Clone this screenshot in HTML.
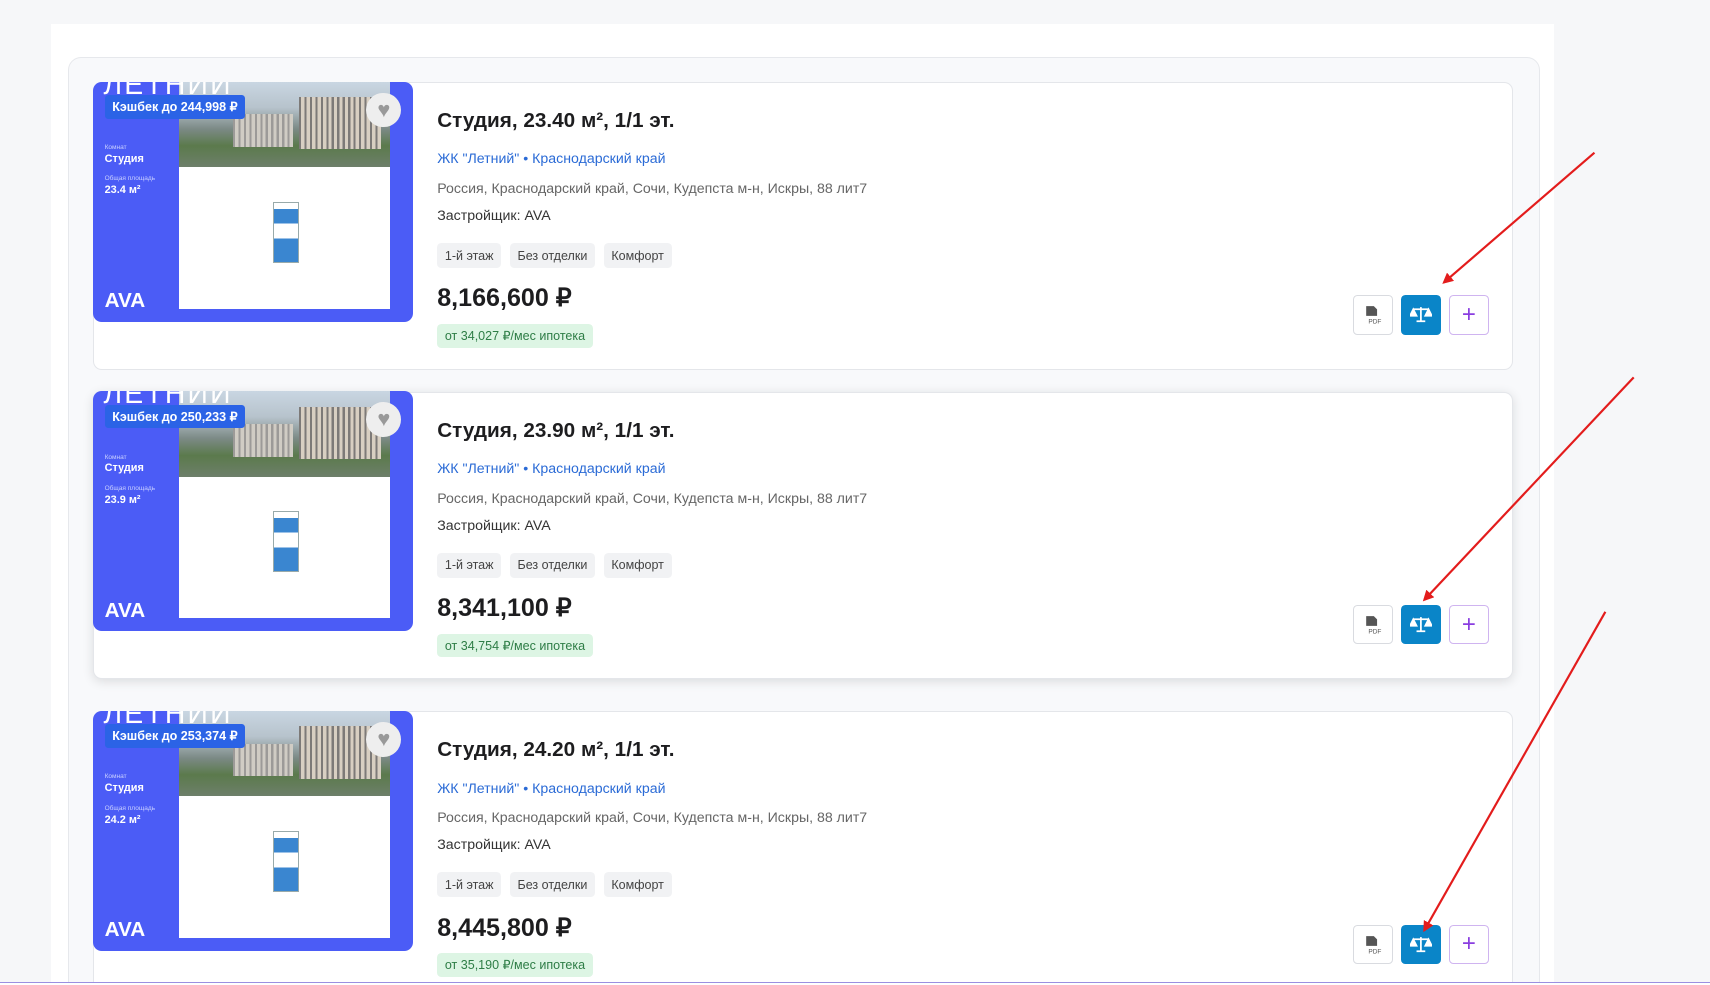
<!DOCTYPE html>
<html><head><meta charset="utf-8"><style>
html,body{margin:0;padding:0;background:#f6f7f9;overflow:hidden;width:1710px;height:985px}
#w{zoom:1.0906;width:1568px;height:903px;position:relative;overflow:hidden;font-family:"Liberation Sans",sans-serif}
.panel{position:absolute;left:47px;top:22px;width:1378px;height:881px;background:#fff}
.cont{position:absolute;left:62px;top:52px;width:1348px;height:870px;background:#f8f9fb;border:1px solid #e6e8ec;border-radius:12px}
.card{position:absolute;left:85px;width:1302px;height:264px;background:#fff;border:1px solid #e4e6ea;border-radius:8px;box-sizing:border-box}
.card.sh{box-shadow:0 2px 10px rgba(0,0,0,.12)}
.img{position:absolute;left:-1px;top:-1px;width:294px;height:220px;background:#4b5cf6;border-radius:8px;overflow:hidden}
.photo{position:absolute;left:79px;top:0;width:194px;height:78px;background:linear-gradient(180deg,#c9d6e2 0,#b7c3cc 30%,#7c8a86 55%,#5b7a4c 75%,#6d7f6a 100%)}
.bld{position:absolute;left:110px;top:14px;width:75px;height:48px;background:repeating-linear-gradient(90deg,#7d7a78 0 2px,#d8cfc2 2px 5px)}
.bld2{position:absolute;left:50px;top:30px;width:55px;height:30px;background:repeating-linear-gradient(90deg,#9c9a98 0 2px,#d0ccc4 2px 5px)}
.plan{position:absolute;left:79px;top:78px;width:194px;height:130px;background:#fff}
.fp{position:absolute;left:86px;top:32px;width:22px;height:54px;border:1px solid #9aa;background:linear-gradient(180deg,#fff 0 10%,#3a86d0 10% 35%,#fff 35% 60%,#3a86d0 60% 100%)}
.let{position:absolute;left:10px;top:-12px;color:#fff;font-size:26px;letter-spacing:2px}
.cash{position:absolute;left:11px;top:12px;background:#2b63e6;color:#fff;font-size:11.5px;font-weight:bold;padding:4px 7px;border-radius:3px}
.heart{position:absolute;left:251px;top:10px;width:32px;height:32px;border-radius:50%;background:#eee;color:#999;font-size:20px;text-align:center;line-height:32px}
.sm{position:absolute;left:11px;color:#c8cfff;font-size:6px}
.bv{position:absolute;left:11px;color:#fff;font-size:10px;font-weight:bold}
.ava{position:absolute;left:11px;top:190px;color:#fff;font-size:19px;font-weight:900}
.t{position:absolute;left:315px}
.title{top:24px;font-size:19px;font-weight:bold;color:#1d1d1f}
.link{top:63px;font-size:13px;color:#2b6bd6}
.addr{top:90px;font-size:13px;color:#666}
.dev{top:115px;font-size:13px;color:#333}
.tags{top:147px;display:flex;gap:8px}
.tags span{background:#f1f2f4;color:#444;font-size:11.5px;padding:5px 7px;border-radius:4px}
.price{top:184px;font-size:23px;font-weight:bold;color:#1d1d1f}
.mort{top:221px;background:#ddf5e4;color:#2e7d46;font-size:11.5px;padding:4px 7px;border-radius:4px}
.btns{position:absolute;left:1155px;top:195px;display:flex;gap:8px}
.b{width:36px;height:36px;box-sizing:border-box;border:1px solid #d9dbe0;border-radius:4px;display:flex;align-items:center;justify-content:center;background:#fff}
.b.c{background:#0a85c8;border-color:#0a85c8}
.b.p{border-color:#cfb4f0;color:#8a3ee0;font-size:22px}
.line{position:absolute;left:0;top:900px;width:1568px;height:1px;background:#9b8fe0}
.below{position:absolute;left:0;top:901px;width:1568px;height:5px;background:#fff}
</style></head><body><div id="w">
<div class="panel"></div><div class="cont"></div>

<div class="card" style="top:75px">
 <div class="img"><div class="photo"><div class="bld2"></div><div class="bld"></div></div><div class="plan"><div class="fp"></div></div>
 <div class="let">ЛЕТНИЙ</div><div class="cash">Кэшбек до 244,998 ₽</div><div class="heart">♥</div>
 <div class="sm" style="top:57px">Комнат</div><div class="bv" style="top:65px">Студия</div>
 <div class="sm" style="top:86px">Общая площадь</div><div class="bv" style="top:94px">23.4 м²</div>
 <div class="ava">AVA</div></div>
 <div class="t title">Студия, 23.40 м², 1/1 эт.</div>
 <div class="t link">ЖК "Летний" • Краснодарский край</div>
 <div class="t addr">Россия, Краснодарский край, Сочи, Кудепста м-н, Искры, 88 лит7</div>
 <div class="t dev">Застройщик: AVA</div>
 <div class="t tags"><span>1-й этаж</span><span>Без отделки</span><span>Комфорт</span></div>
 <div class="t price">8,166,600 ₽</div>
 <div class="t mort">от 34,027 ₽/мес ипотека</div>
 <div class="btns"><div class="b"><svg width="16" height="18" viewBox="0 0 16 18"><path d="M2 1h7l3 3v6H2z" fill="#555"/><text x="4" y="17" font-size="6" fill="#555" font-family="Liberation Sans">PDF</text></svg></div>
 <div class="b c"><svg width="20" height="16" viewBox="0 0 20 16" fill="none" stroke="#fff" stroke-width="1.6"><path d="M10 1v13M3 3h14M6 14h8"/><path d="M3 3l-3 6h6z M17 3l-3 6h6z" fill="#fff"/></svg></div>
 <div class="b p">+</div></div>
</div>

<div class="card sh" style="top:359px">
 <div class="img"><div class="photo"><div class="bld2"></div><div class="bld"></div></div><div class="plan"><div class="fp"></div></div>
 <div class="let">ЛЕТНИЙ</div><div class="cash">Кэшбек до 250,233 ₽</div><div class="heart">♥</div>
 <div class="sm" style="top:57px">Комнат</div><div class="bv" style="top:65px">Студия</div>
 <div class="sm" style="top:86px">Общая площадь</div><div class="bv" style="top:94px">23.9 м²</div>
 <div class="ava">AVA</div></div>
 <div class="t title">Студия, 23.90 м², 1/1 эт.</div>
 <div class="t link">ЖК "Летний" • Краснодарский край</div>
 <div class="t addr">Россия, Краснодарский край, Сочи, Кудепста м-н, Искры, 88 лит7</div>
 <div class="t dev">Застройщик: AVA</div>
 <div class="t tags"><span>1-й этаж</span><span>Без отделки</span><span>Комфорт</span></div>
 <div class="t price">8,341,100 ₽</div>
 <div class="t mort">от 34,754 ₽/мес ипотека</div>
 <div class="btns"><div class="b"><svg width="16" height="18" viewBox="0 0 16 18"><path d="M2 1h7l3 3v6H2z" fill="#555"/><text x="4" y="17" font-size="6" fill="#555" font-family="Liberation Sans">PDF</text></svg></div>
 <div class="b c"><svg width="20" height="16" viewBox="0 0 20 16" fill="none" stroke="#fff" stroke-width="1.6"><path d="M10 1v13M3 3h14M6 14h8"/><path d="M3 3l-3 6h6z M17 3l-3 6h6z" fill="#fff"/></svg></div>
 <div class="b p">+</div></div>
</div>

<div class="card" style="top:652px">
 <div class="img"><div class="photo"><div class="bld2"></div><div class="bld"></div></div><div class="plan"><div class="fp"></div></div>
 <div class="let">ЛЕТНИЙ</div><div class="cash">Кэшбек до 253,374 ₽</div><div class="heart">♥</div>
 <div class="sm" style="top:57px">Комнат</div><div class="bv" style="top:65px">Студия</div>
 <div class="sm" style="top:86px">Общая площадь</div><div class="bv" style="top:94px">24.2 м²</div>
 <div class="ava">AVA</div></div>
 <div class="t title">Студия, 24.20 м², 1/1 эт.</div>
 <div class="t link">ЖК "Летний" • Краснодарский край</div>
 <div class="t addr">Россия, Краснодарский край, Сочи, Кудепста м-н, Искры, 88 лит7</div>
 <div class="t dev">Застройщик: AVA</div>
 <div class="t tags"><span>1-й этаж</span><span>Без отделки</span><span>Комфорт</span></div>
 <div class="t price">8,445,800 ₽</div>
 <div class="t mort">от 35,190 ₽/мес ипотека</div>
 <div class="btns"><div class="b"><svg width="16" height="18" viewBox="0 0 16 18"><path d="M2 1h7l3 3v6H2z" fill="#555"/><text x="4" y="17" font-size="6" fill="#555" font-family="Liberation Sans">PDF</text></svg></div>
 <div class="b c"><svg width="20" height="16" viewBox="0 0 20 16" fill="none" stroke="#fff" stroke-width="1.6"><path d="M10 1v13M3 3h14M6 14h8"/><path d="M3 3l-3 6h6z M17 3l-3 6h6z" fill="#fff"/></svg></div>
 <div class="b p">+</div></div>
</div>

<div class="below"></div><div class="line"></div>
<svg style="position:absolute;left:0;top:0" width="1568" height="903">
<defs><marker id="a" markerWidth="10" markerHeight="10" refX="8" refY="5" orient="auto" markerUnits="userSpaceOnUse"><path d="M0 0L10 5L0 10z" fill="#e31c1c"/></marker></defs>
<g stroke="#e31c1c" stroke-width="2" marker-end="url(#a)">
<line x1="1462" y1="140" x2="1324" y2="259"/>
<line x1="1498" y1="346" x2="1306" y2="550"/>
<line x1="1472" y1="561" x2="1306" y2="853"/>
</g></svg>
</div></body></html>
